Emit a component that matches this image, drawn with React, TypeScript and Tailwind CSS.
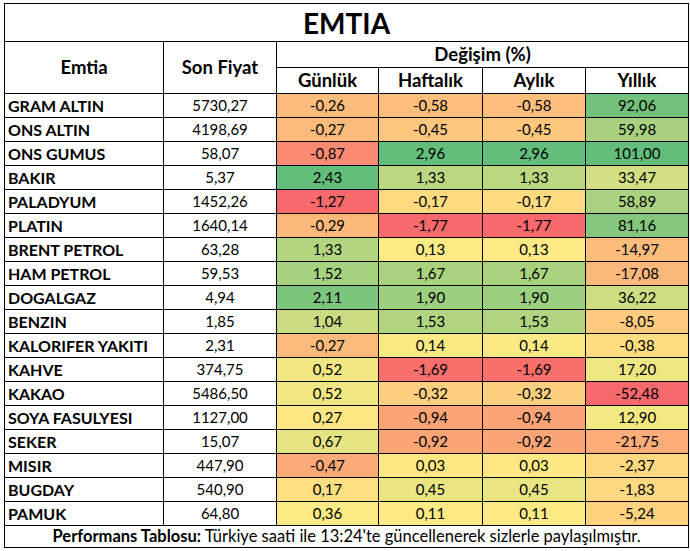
type Row = [string, string, number, number, number, number];

const rows: Row[] = [
  ["GRAM ALTIN", "5730,27", -0.26, -0.58, -0.58, 92.06],
  ["ONS ALTIN", "4198,69", -0.27, -0.45, -0.45, 59.98],
  ["ONS GUMUS", "58,07", -0.87, 2.96, 2.96, 101.0],
  ["BAKIR", "5,37", 2.43, 1.33, 1.33, 33.47],
  ["PALADYUM", "1452,26", -1.27, -0.17, -0.17, 58.89],
  ["PLATIN", "1640,14", -0.29, -1.77, -1.77, 81.16],
  ["BRENT PETROL", "63,28", 1.33, 0.13, 0.13, -14.97],
  ["HAM PETROL", "59,53", 1.52, 1.67, 1.67, -17.08],
  ["DOGALGAZ", "4,94", 2.11, 1.9, 1.9, 36.22],
  ["BENZIN", "1,85", 1.04, 1.53, 1.53, -8.05],
  ["KALORIFER YAKITI", "2,31", -0.27, 0.14, 0.14, -0.38],
  ["KAHVE", "374,75", 0.52, -1.69, -1.69, 17.2],
  ["KAKAO", "5486,50", 0.52, -0.32, -0.32, -52.48],
  ["SOYA FASULYESI", "1127,00", 0.27, -0.94, -0.94, 12.9],
  ["SEKER", "15,07", 0.67, -0.92, -0.92, -21.75],
  ["MISIR", "447,90", -0.47, 0.03, 0.03, -2.37],
  ["BUGDAY", "540,90", 0.17, 0.45, 0.45, -1.83],
  ["PAMUK", "64,80", 0.36, 0.11, 0.11, -5.24],
];

const RED = [248, 105, 107];
const YELLOW = [255, 235, 132];
const GREEN = [99, 190, 123];

// excel style 3 colour scale, per column
function makeScale(values: number[]) {
  const s = [...values].sort((a, b) => a - b);
  const min = s[0];
  const max = s[s.length - 1];
  const n = s.length;
  const mid = n % 2 ? s[(n - 1) / 2] : (s[n / 2 - 1] + s[n / 2]) / 2;
  return (v: number) => {
    let from = RED;
    let to = YELLOW;
    let t = 0;
    if (v <= mid) {
      t = (v - min) / (mid - min);
    } else {
      from = YELLOW;
      to = GREEN;
      t = (v - mid) / (max - mid);
    }
    const c = from.map((f, i) => Math.round(f + (to[i] - f) * t));
    return `rgb(${c[0]},${c[1]},${c[2]})`;
  };
}

const scales = [2, 3, 4, 5].map((i) => makeScale(rows.map((r) => r[i] as number)));

const fmt = (v: number) => v.toFixed(2).replace(".", ",");

export default function App() {
  return (
    <div className="w-[690px] h-[551px] bg-white pl-[4px] pt-[3px] font-['Lato',sans-serif] text-black">
      <table className="table-fixed border-collapse border border-black w-[684px]">
        <colgroup>
          <col className="w-[159px]" />
          <col className="w-[113px]" />
          <col className="w-[102px]" />
          <col className="w-[104px]" />
          <col className="w-[103px]" />
          <col className="w-[103px]" />
        </colgroup>
        <thead>
          <tr>
            <th colSpan={6} className="h-[38px] border border-black text-[28px] font-bold leading-none">
              EMTIA
            </th>
          </tr>
          <tr>
            <th rowSpan={2} className="border border-black text-[18.5px] font-bold leading-none">
              Emtia
            </th>
            <th rowSpan={2} className="border border-black text-[18.5px] font-bold leading-none">
              Son Fiyat
            </th>
            <th colSpan={4} className="h-[26px] border border-black text-[18.5px] font-bold leading-none">
              Değişim (%)
            </th>
          </tr>
          <tr>
            {["Günlük", "Haftalık", "Aylık", "Yıllık"].map((h) => (
              <th key={h} className="h-[26px] border border-black text-[18.5px] font-bold leading-none">
                {h}
              </th>
            ))}
          </tr>
        </thead>
        <tbody>
          {rows.map((r) => (
            <tr key={r[0]}>
              <td className="h-[24px] border border-black pl-[3px] text-[16px] font-bold leading-none whitespace-nowrap">
                {r[0]}
              </td>
              <td className="border border-black text-center text-[15px] leading-none">{r[1]}</td>
              {[2, 3, 4, 5].map((i, k) => (
                <td
                  key={i}
                  className="border border-black text-center text-[15px] leading-none"
                  style={{ backgroundColor: scales[k](r[i] as number) }}
                >
                  {fmt(r[i] as number)}
                </td>
              ))}
            </tr>
          ))}
          <tr>
            <td colSpan={6} className="h-[22px] border border-black text-center text-[16.5px] leading-none whitespace-nowrap">
              <span className="font-bold">Performans Tablosu:</span> Türkiye saati ile 13:24'te güncellenerek sizlerle
              paylaşılmıştır.
            </td>
          </tr>
        </tbody>
      </table>
    </div>
  );
}
